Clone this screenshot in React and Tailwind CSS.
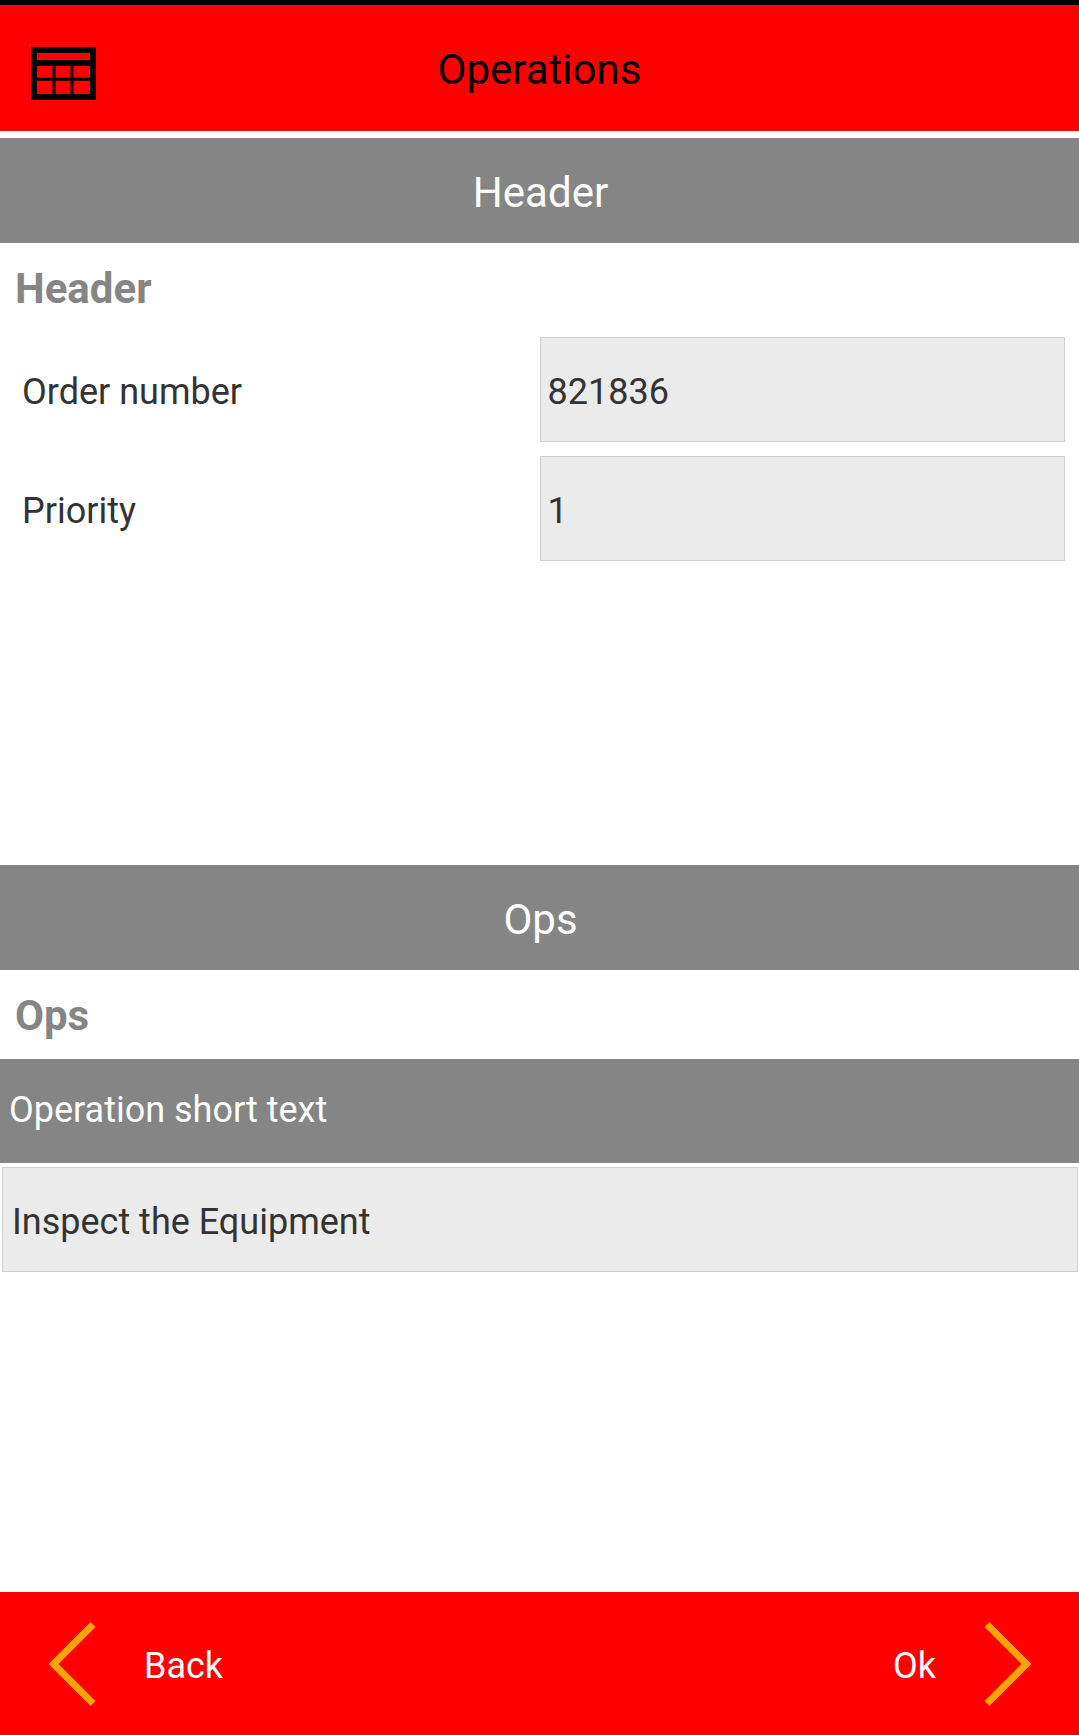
function TableIcon() {
  return (
    <svg width="65" height="53" viewBox="0 0 65 53" fill="none" stroke="#000" aria-hidden="true">
      <rect x="3" y="3" width="59" height="47" strokeWidth="6" />
      <path d="M3 16H62" strokeWidth="6" />
      <path d="M3 32.3H62M23 16V50M41 16V50" strokeWidth="3" />
    </svg>
  );
}

function Chevron({ d }) {
  return (
    <svg width="48" height="86" viewBox="0 0 48 86" fill="none" stroke="#ffa500" strokeWidth="7" aria-hidden="true">
      <path d={d} />
    </svg>
  );
}

function Banner({ children }) {
  return (
    <h2 className="flex h-[105px] items-center justify-center bg-[#858585] pt-1 pl-0.5 text-[42px] text-white">
      {children}
    </h2>
  );
}

function SectionTitle({ children }) {
  return <h3 className="px-[15px] pt-0.5 text-[42px] leading-[87px] font-bold text-[#858585]">{children}</h3>;
}

const inputStyle =
  "block h-[105px] w-full rounded-none border border-[#d0d0d0] bg-[#ebebeb] pt-1 text-[36px] text-[#333333] outline-none";

function Field({ id, label, value }) {
  return (
    <div className="grid grid-cols-2 items-center">
      <label htmlFor={id} className="pt-1 pl-[22px] text-[36px] text-[#333333]">
        {label}
      </label>
      <div className="pr-[14px]">
        <input id={id} type="text" defaultValue={value} className={inputStyle + " px-[7px]"} />
      </div>
    </div>
  );
}

export default function App() {
  return (
    <div className="flex min-h-screen flex-col bg-white font-['Roboto',sans-serif]">
      <header className="mb-[7px] grid h-[131px] grid-cols-[1fr_auto_1fr] items-center border-t-[5px] border-black bg-[#ff0000]">
        <button type="button" aria-label="Menu" className="justify-self-start pt-[10px] pl-[31px]">
          <TableIcon />
        </button>
        <h1 className="pt-0.5 text-[42px] text-black">Operations</h1>
      </header>

      <main className="flex flex-1 flex-col">
        <section className="flex-1 basis-0">
          <Banner>Header</Banner>
          <SectionTitle>Header</SectionTitle>
          <div className="flex flex-col gap-[14px] pt-[5px]">
            <Field id="order-number" label="Order number" value="821836" />
            <Field id="priority" label="Priority" value="1" />
          </div>
        </section>

        <section className="flex-1 basis-0">
          <Banner>Ops</Banner>
          <SectionTitle>Ops</SectionTitle>
          <table className="w-full">
            <thead>
              <tr>
                <th
                  id="short-text"
                  scope="col"
                  className="h-[104px] bg-[#858585] px-[9px] pb-0.5 text-left align-middle text-[36px] font-normal text-white"
                >
                  Operation short text
                </th>
              </tr>
            </thead>
            <tbody>
              <tr>
                <td className="pt-1 pr-px pl-0.5">
                  <input
                    type="text"
                    aria-labelledby="short-text"
                    defaultValue="Inspect the Equipment"
                    className={inputStyle + " px-[9px]"}
                  />
                </td>
              </tr>
            </tbody>
          </table>
        </section>
      </main>

      <footer className="flex h-[143px] items-center justify-between bg-[#ff0000] pr-[47px] pl-12 text-[36px] text-white">
        <button type="button" className="flex items-center gap-12">
          <Chevron d="M45 3.5L5.5 43L45 82.5" />
          <span className="pt-1">Back</span>
        </button>
        <button type="button" className="flex items-center gap-12">
          <span className="pt-1">Ok</span>
          <Chevron d="M3 3.5L42.5 43L3 82.5" />
        </button>
      </footer>
    </div>
  );
}
